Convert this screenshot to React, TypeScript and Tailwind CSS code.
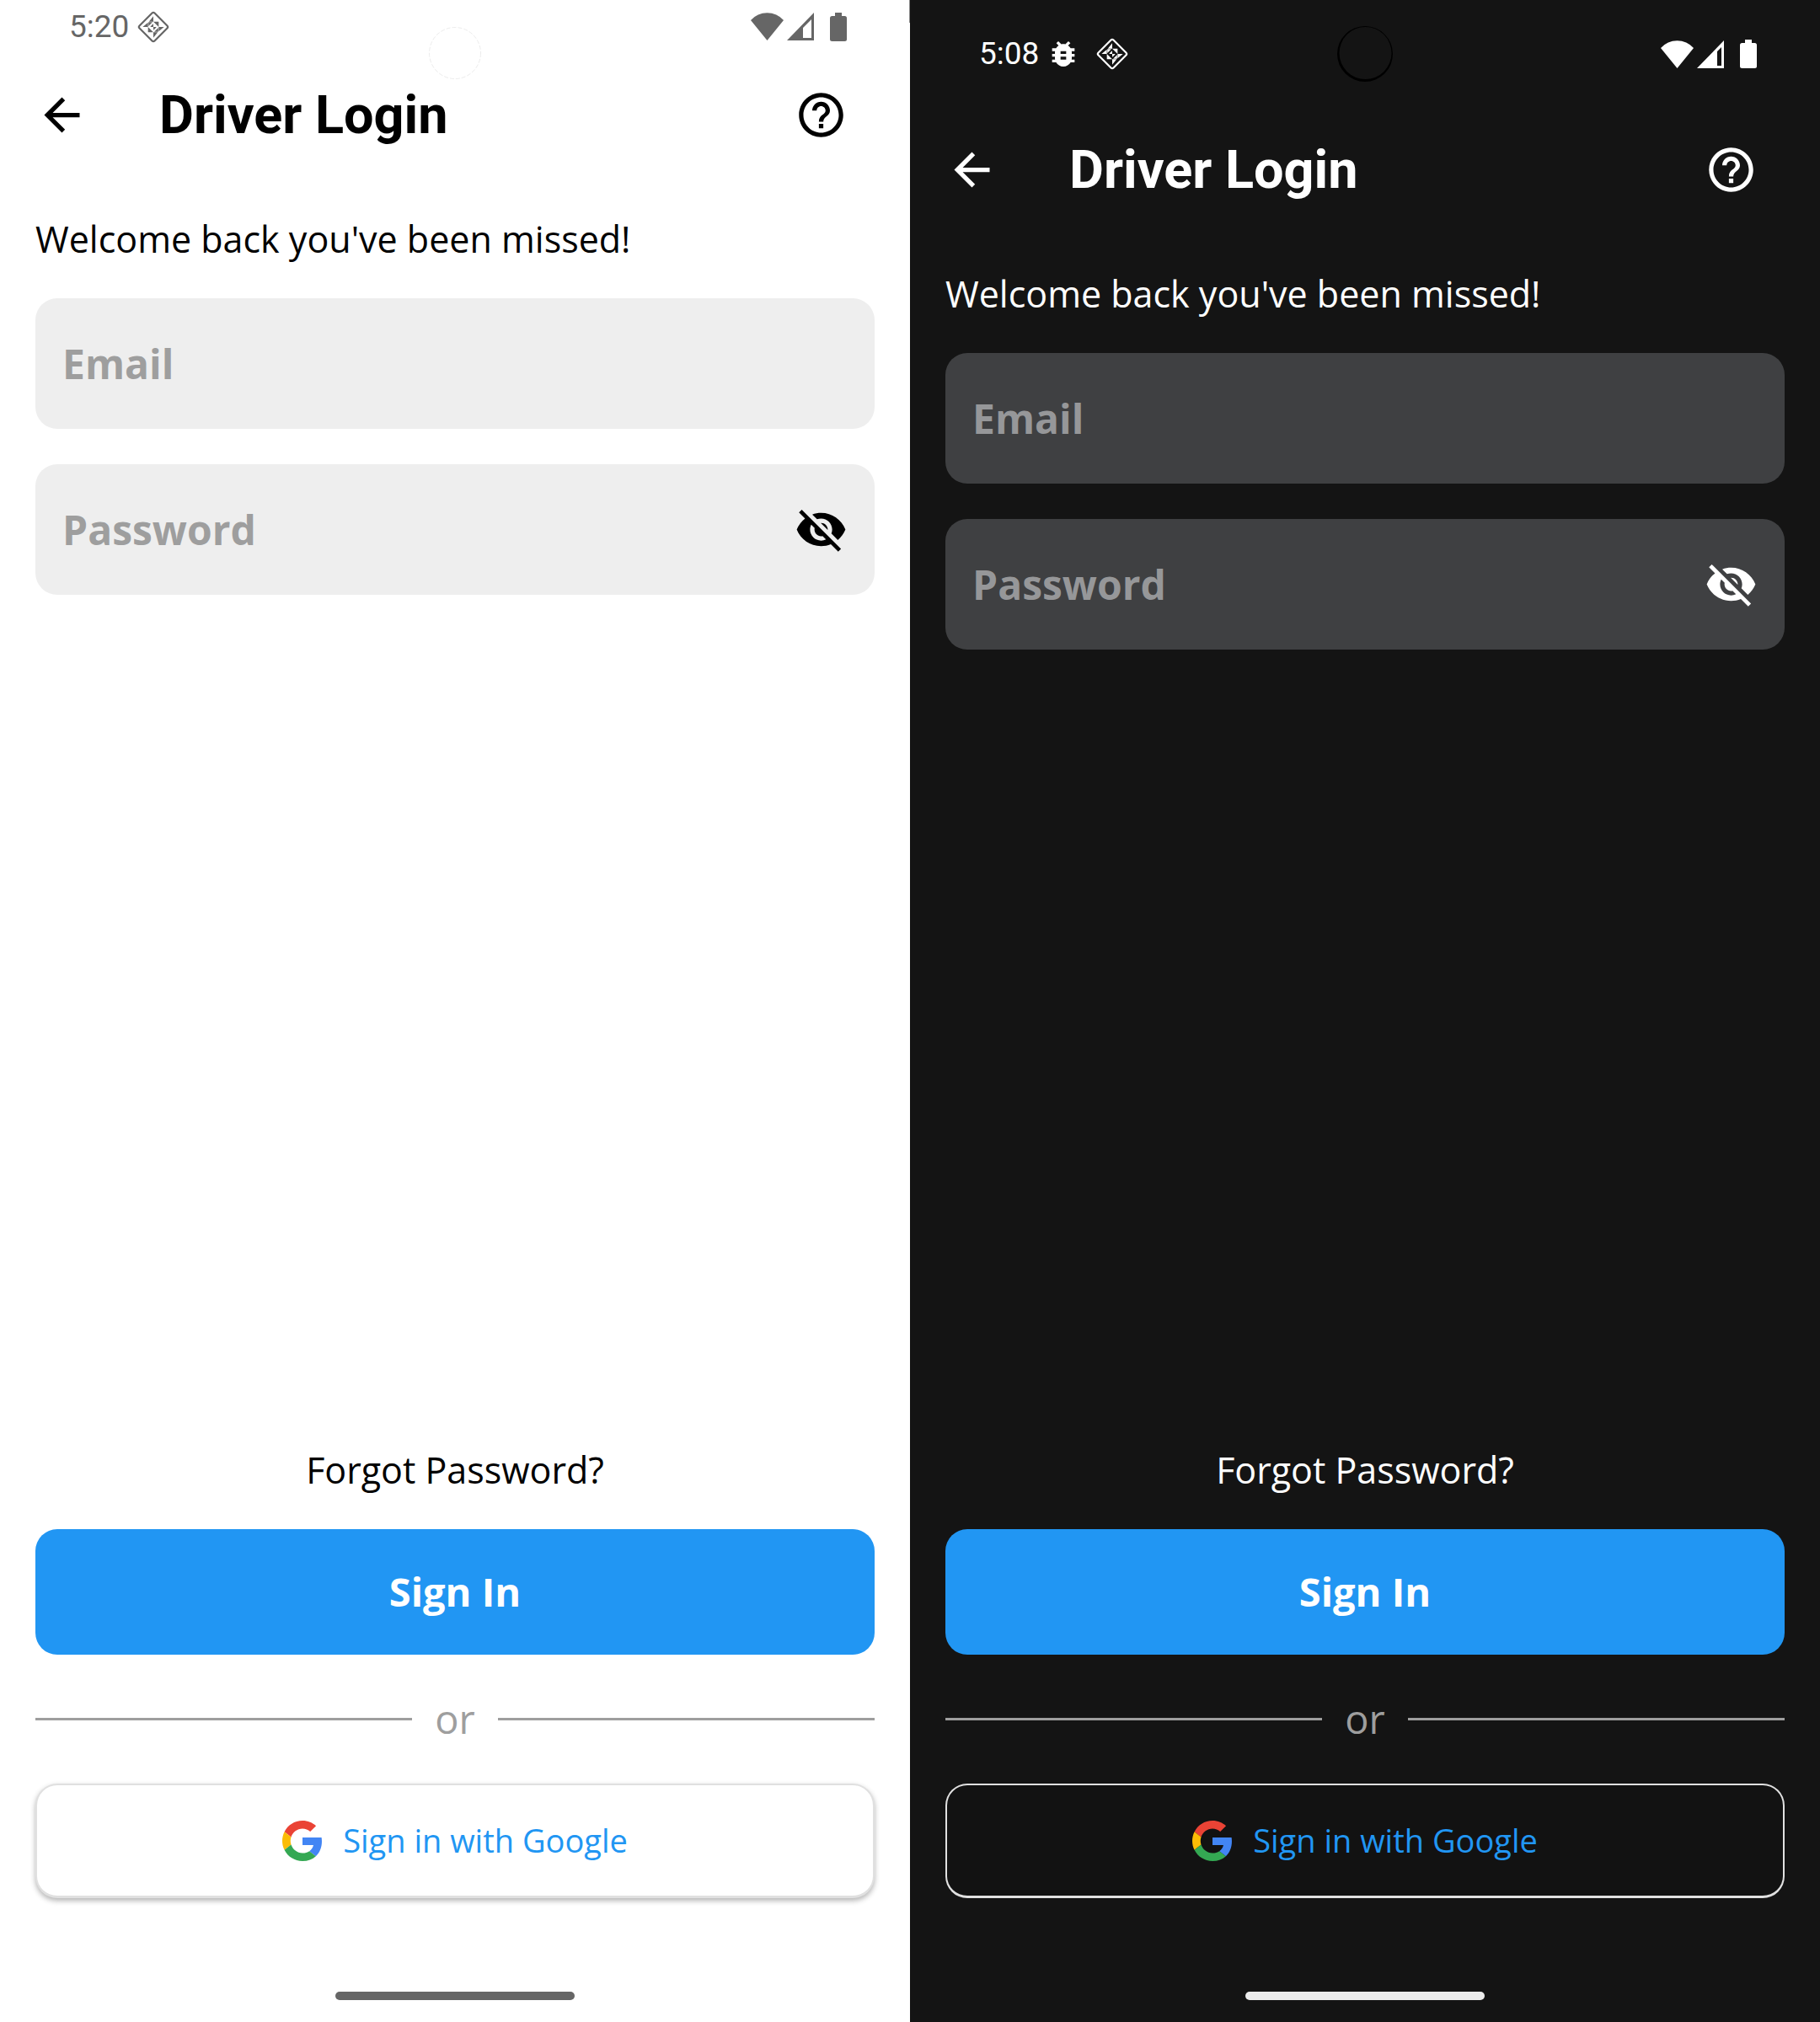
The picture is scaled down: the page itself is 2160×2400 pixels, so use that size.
import React from "react";
import { MdArrowBack, MdBugReport, MdHelpOutline, MdVisibilityOff } from "react-icons/md";

type Theme = {
  id: string;
  time: string;
  debug: boolean;
  screen: string;
  statusBar: string;
  statusTone: string;
  field: string;
  google: string;
  homeBar: string;
  cellHole: string;
};

const light: Theme = {
  id: "light",
  time: "5:20",
  debug: false,
  screen: "bg-white text-black",
  statusBar: "h-[63px]",
  statusTone: "text-[#666666]",
  field: "bg-[#eeeeee] placeholder:text-[#9e9e9e]",
  google: "bg-white border-[#e0e0e0] shadow-[0_3px_6px_rgba(0,0,0,0.3)]",
  homeBar: "bg-[#666666]",
  cellHole: "M19 18V30H29V8Z",
};

const dark: Theme = {
  id: "dark",
  time: "5:08",
  debug: true,
  screen: "bg-[#141414] text-white",
  statusBar: "h-32",
  statusTone: "text-white",
  field: "bg-[#3f4042] placeholder:text-[#969799]",
  google: "bg-[#121212] border-[#e0e0e0]",
  homeBar: "bg-[#ececec]",
  cellHole: "M24 13V30H29V8Z",
};

function DiamondIcon() {
  return (
    <svg width="38" height="38" viewBox="0 0 36 36" fill="currentColor" aria-hidden="true">
      <rect x="6" y="6" width="24" height="24" rx="2" transform="rotate(45 18 18)" fill="none" stroke="currentColor" strokeWidth="2.1" />
      <path d="M18 6V12H13ZM6 18H12V13ZM18 30V24H23ZM30 18H24V23Z" />
      <path d="M18 12H24V18ZM18 24H12V18ZM12.5 12.5H17L12.5 17ZM23.5 23.5H19L23.5 19Z" />
      <path d="M16 16L18 14.5V18H14.5ZM20 20L18 21.5V18H21.5Z" />
    </svg>
  );
}

function WifiIcon() {
  return (
    <svg width="39" height="33" viewBox="0 0 39 33" fill="currentColor" aria-hidden="true">
      <path d="M0 9A26 26 0 0 1 39 9L19.5 33Z" />
    </svg>
  );
}

function CellIcon({ hole }: { hole: string }) {
  return (
    <svg width="32" height="33" viewBox="0 0 32 33" fill="currentColor" fillRule="evenodd" aria-hidden="true">
      <path d={"M0 33H32V0Z" + hole} />
    </svg>
  );
}

function BatteryIcon() {
  return (
    <svg width="20" height="34" viewBox="0 0 20 34" fill="currentColor" aria-hidden="true">
      <rect x="6" y="0" width="8" height="6" />
      <rect x="0" y="4" width="20" height="30" rx="2.5" />
    </svg>
  );
}

function GoogleIcon() {
  return (
    <svg width="48" height="48" viewBox="0 0 48 48" aria-hidden="true">
      <path fill="#EA4335" d="M24 9.5c3.54 0 6.71 1.22 9.21 3.6l6.85-6.85C35.9 2.38 30.47 0 24 0 14.62 0 6.51 5.38 2.56 13.22l7.98 6.19C12.43 13.72 17.74 9.5 24 9.5z" />
      <path fill="#4285F4" d="M46.98 24.55c0-1.57-.15-3.09-.38-4.55H24v9.02h12.94c-.58 2.96-2.26 5.48-4.78 7.18l7.73 6c4.51-4.18 7.09-10.36 7.09-17.65z" />
      <path fill="#FBBC05" d="M10.53 28.59c-.48-1.45-.76-2.99-.76-4.59s.27-3.14.76-4.59l-7.98-6.19C.92 16.46 0 20.12 0 24c0 3.88.92 7.54 2.56 10.78l7.97-6.19z" />
      <path fill="#34A853" d="M24 48c6.48 0 11.93-2.13 15.89-5.81l-7.73-6c-2.15 1.45-4.92 2.3-8.16 2.3-6.26 0-11.57-4.22-13.47-9.91l-7.98 6.19C6.51 42.62 14.62 48 24 48z" />
    </svg>
  );
}

function LightCamera() {
  return (
    <svg className="absolute left-1/2 top-8 -translate-x-1/2" width="62" height="62" viewBox="0 0 62 62" aria-hidden="true">
      <circle cx="31" cy="31" r="30.5" fill="none" stroke="#ececec" strokeWidth="1" strokeDasharray="5 2" />
    </svg>
  );
}

function DarkCamera() {
  return (
    <svg className="absolute left-1/2 top-[31px] -translate-x-1/2" width="66" height="66" viewBox="0 0 66 66" aria-hidden="true">
      <path fill="#000000" fillRule="evenodd" d="M33 0a33 33 0 1 0 0 66a33 33 0 1 0 0-66ZM33.5 1a31 31 0 1 1 0 62a31 31 0 1 1 0-62Z" />
    </svg>
  );
}

function LoginScreen({ theme }: { theme: Theme }) {
  return (
    <section className={"relative flex min-h-screen min-w-0 flex-1 flex-col font-['Open_Sans',sans-serif] " + theme.screen}>
      {theme.id === "light" && <span className="absolute right-0 top-0 h-[27px] w-px bg-[#888888]" />}
      <div className={"flex items-center justify-between pl-[82px] pr-[75px] " + theme.statusBar + " " + theme.statusTone}>
        <div className="flex items-center">
          <span className="font-[Roboto,sans-serif] text-[37px] leading-10">{theme.time}</span>
          {theme.debug && <MdBugReport className="mx-[9px] size-10" aria-hidden="true" />}
          <span className="ml-[10px]">
            <DiamondIcon />
          </span>
        </div>
        <div className="flex items-center">
          <WifiIcon />
          <span className="ml-1 mr-[19px]">
            <CellIcon hole={theme.cellHole} />
          </span>
          <BatteryIcon />
        </div>
      </div>
      {theme.id === "light" ? <LightCamera /> : <DarkCamera />}

      <header className="flex h-[147px] items-center pl-[42px] pr-[74px]">
        <button type="button" aria-label="Back">
          <MdArrowBack className="size-[63px]" />
        </button>
        <h1 className="ml-21 flex-1 font-[Roboto,sans-serif] text-[63px] font-bold leading-[75px]">Driver Login</h1>
        <button type="button" aria-label="Help">
          <MdHelpOutline className="size-[63px]" />
        </button>
      </header>

      <form className="flex flex-1 flex-col px-[42px] pt-11">
        <p className="text-[43px] leading-[60px]">Welcome back you've been missed!</p>
        <input
          type="email"
          aria-label="Email"
          placeholder="Email"
          className={"mt-10 h-[155px] w-full rounded-[26px] px-8 text-[48px] font-bold outline-none placeholder:opacity-100 " + theme.field}
        />
        <div className="relative mt-[42px]">
          <input
            type="password"
            aria-label="Password"
            placeholder="Password"
            className={"h-[155px] w-full rounded-[26px] pl-8 pr-28 text-[48px] font-bold outline-none placeholder:opacity-100 " + theme.field}
          />
          <button type="button" aria-label="Show password" className="absolute inset-y-0 right-8 flex items-center">
            <MdVisibilityOff className="size-[63px]" />
          </button>
        </div>

        <a href="#forgot" className="mt-auto self-center pt-10 text-[43px] leading-[60px]">Forgot Password?</a>
        <button type="submit" className="mt-10 h-[149px] rounded-[26px] bg-[#2196f3] text-[47px] font-bold text-white">
          Sign In
        </button>
        <div className="flex items-center gap-[27px] py-11 text-[47px] leading-[65px] text-[#9e9e9e]">
          <span className="h-[3px] flex-1 bg-[#9e9e9e]" />
          or
          <span className="h-[3px] flex-1 bg-[#9e9e9e]" />
        </div>
        <button
          type="button"
          className={"flex h-[136px] items-center justify-center gap-6 rounded-[26px] border-2 border-b-3 text-[38px] font-medium text-[#2196f3] " + theme.google}
        >
          <GoogleIcon />
          Sign in with Google
        </button>
      </form>

      <footer className="flex h-[147px] flex-col items-center justify-end pb-[26px]">
        <span className={"h-[10px] w-[284px] rounded-full " + theme.homeBar} />
      </footer>
    </section>
  );
}

export default function App() {
  return (
    <main className="flex min-h-screen">
      <LoginScreen theme={light} />
      <LoginScreen theme={dark} />
    </main>
  );
}
